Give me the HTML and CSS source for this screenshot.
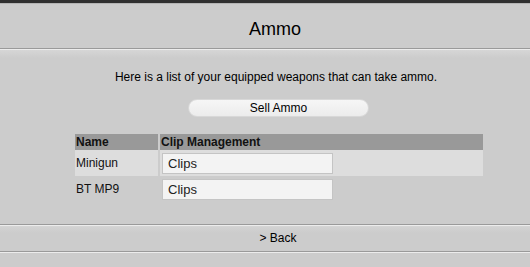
FILE: index.html
```html
<!DOCTYPE html>
<html>
<head>
<meta charset="utf-8">
<link rel="stylesheet" href="styles.css">
</head>
<body>
<div class="topbar"></div>
<div class="header"><h1 class="title">Ammo</h1></div>
<div class="content">
  <p class="intro">Here is a list of your equipped weapons that can take ammo.</p>
  <div class="btn-row"><button class="sell">Sell Ammo</button></div>
  <div class="grid">
    <div class="th">Name</div>
    <div class="th">Clip Management</div>
    <div class="td odd">Minigun</div>
    <div class="td odd"><div class="box">Clips</div></div>
    <div class="td">BT MP9</div>
    <div class="td"><div class="box">Clips</div></div>
  </div>
</div>
<div class="backbar">&gt; Back</div>
<div class="footer"></div>
</body>
</html>
```
FILE: styles.css
```css
html, body {
  margin: 0;
  padding: 0;
  background: #cccccc;
  overflow: hidden;
}
body {
  font-family: "Liberation Sans", Arial, sans-serif;
  color: #111;
  height: 267px;
}
.topbar {
  height: 3px;
  background: #303030;
  border-bottom: 1px solid #b4b4b4;
}
.header {
  height: 37px;
  padding: 7px 0 0 20px;
  border-bottom: 1px solid #9a9a9a;
  text-align: center;
}
.title {
  margin: 0;
  font-size: 18px;
  font-weight: normal;
  line-height: 37px;
  color: #000;
}
.content {
  border-top: 1px solid #ececec;
  background: linear-gradient(#d6d6d6, #cccccc 8px);
  padding: 20px 0 22px 0;
}
.intro {
  margin: 0;
  padding-left: 22px;
  text-align: center;
  font-size: 12px;
  line-height: 15px;
  color: #000;
}
.btn-row {
  display: flex;
  padding-top: 14px;
  padding-left: 188px;
}
.sell {
  width: 181px;
  height: 18px;
  border: 1px solid #d8d8d8;
  border-radius: 9px;
  background: linear-gradient(#f6f6f6, #ececec);
  font-family: "Liberation Sans", Arial, sans-serif;
  font-size: 12px;
  color: #000;
  padding: 0;
  line-height: 16px;
}
.grid {
  display: grid;
  grid-template-columns: 83px 323px;
  grid-template-rows: 16px 26px 26px;
  column-gap: 2px;
  width: 408px;
  margin: 17px 0 0 75px;
}
.th {
  background: #999999;
  font-weight: bold;
  font-size: 12px;
  line-height: 16px;
  padding-left: 1px;
  color: #111;
}
.td {
  font-size: 12px;
  line-height: 26px;
  padding-left: 1px;
  color: #111;
}
.td.odd {
  background: #dddddd;
}
.box {
  width: 164px;
  height: 19px;
  margin: 3px 0 0 1px;
  padding-left: 5px;
  border: 1px solid #c4c4c4;
  background: #f3f3f3;
  font-size: 13px;
  line-height: 19px;
  color: #222;
}
.backbar {
  border-top: 1px solid #9a9a9a;
  box-shadow: inset 0 1px 0 #ececec;
  background: linear-gradient(#d6d6d6 1px, #d2d2d2 2px, #cccccc 8px);
  height: 26px;
  line-height: 26px;
  padding-left: 26px;
  text-align: center;
  font-size: 12px;
  color: #000;
  border-bottom: 1px solid #9a9a9a;
}
.footer {
  border-top: 1px solid #ececec;
  height: 20px;
}
```
